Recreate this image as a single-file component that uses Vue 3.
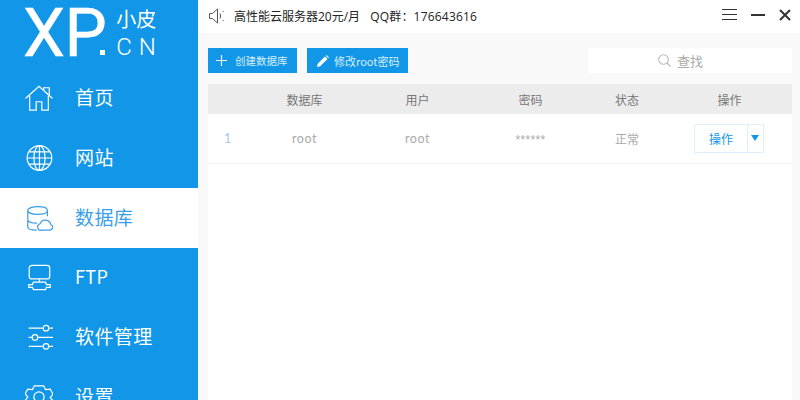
<script setup>
const nav = [
  { key: 'home', label: '首页' },
  { key: 'web', label: '网站' },
  { key: 'db', label: '数据库', active: true },
  { key: 'ftp', label: 'FTP' },
  { key: 'soft', label: '软件管理' },
  { key: 'set', label: '设置' }
]
</script>

<template>
  <div class="app">
    <aside class="side">
      <div class="logo">
        <span class="xp">XP</span><span class="dot"></span>
        <div class="logo-r"><span class="zh">小皮</span><span class="cn">CN</span></div>
      </div>
      <nav class="nav">
        <div v-for="n in nav" :key="n.key" class="item" :class="{ active: n.active }">
          <svg class="ico" viewBox="0 0 30 30" fill="none" stroke="currentColor" stroke-width="1.300">
            <template v-if="n.key === 'home'">
              <path d="M.5 15.500 15 2.500 29.500 15.500" /><path d="M20 6.500V4h6v8" />
              <path d="M5 12.500V28h7v-9h6v9h7V12.500" />
            </template>
            <template v-else-if="n.key === 'web'">
              <circle cx="15.500" cy="15" r="13.200" /><ellipse cx="15.500" cy="15" rx="6" ry="13.200" />
              <path d="M15.500 1.800v26.400M2.300 15h26.400M4.300 8.500h22.400M4.300 21.500h22.400" />
            </template>
            <template v-else-if="n.key === 'db'">
              <path d="M3 7c0-5.500 21-5.500 21 0s-21 5.500-21 0zM3 7v18c0 2 4 3 9.500 3M3 16.500c0 2.500 4 4 10 4M24 7v6" />
              <path d="M18 28h9a3 3 0 0 0 .7-5.800 6 6 0 0 0-11.500-1A3.500 3.500 0 0 0 18 28z" />
            </template>
            <template v-else-if="n.key === 'ftp'">
              <rect x="4.500" y="1.500" width="22" height="14.500" rx="3" />
              <path d="M15.500 16v3.500" />
              <path d="M9 19.500h13l1 2.500h4v3h-4l-1 2.500H9L8 25H4v-3h4z" />
            </template>
            <template v-else-if="n.key === 'soft'">
              <path d="M4 5.500h15M26 5.500h4M4 15.500h3.500M14 15.500h16M4 25h15M26 25h4" />
              <circle cx="22.500" cy="5.500" r="3" /><circle cx="10.700" cy="15.500" r="3" /><circle cx="22.500" cy="25" r="3" />
            </template>
            <template v-else>
              <path d="M10 3h10l2 4 5-.5 3 5.500-3 3.500 3 3.500-3 5.500-5-.5-2 4H10l-2-4-5 .5-3-5.500L3 15 0 11.500 3 6.500l5 .5z" />
              <circle cx="15" cy="15" r="5.500" />
            </template>
          </svg>
          <span class="lbl">{{ n.label }}</span>
        </div>
      </nav>
    </aside>

    <main class="main">
      <header class="top">
        <svg class="spk" width="18" height="16" viewBox="0 0 18 16" fill="none" stroke="#555" stroke-width="1">
          <path d="M1.500 5.500h3l5-4.500v14l-5-4.500h-3z" /><path d="M12 5.500q1.500 2.500 0 5M15 3v1M15 12v1" />
        </svg>
        <span class="notice">高性能云服务器20元/月</span>
        <span class="qq">QQ群：176643616</span>
        <div class="win">
          <svg width="15" height="12" viewBox="0 0 15 12" stroke="#333" stroke-width="1"><path d="M0 .5h15M0 5.500h15M0 10.500h15" /></svg>
          <svg width="14" height="12" viewBox="0 0 14 12" stroke="#333" stroke-width="2"><path d="M0 6h14" /></svg>
          <svg width="12" height="12" viewBox="0 0 12 12" stroke="#333" stroke-width="2"><path d="M1 1l10 10M11 1 1 11" /></svg>
        </div>
      </header>

      <section class="body">
        <div class="tools">
          <button class="btn b1">
            <svg width="11" height="11" viewBox="0 0 11 11" stroke="#fff" stroke-width="1.200"><path d="M5.500 0v11M0 5.500h11" /></svg>
            <span>创建数据库</span>
          </button>
          <button class="btn b2">
            <svg width="12" height="12" viewBox="0 0 12 12" fill="#fff"><path d="M0 12l.7-3.200L8 1.500l2.500 2.500-7.300 7.300zM8.800.7 9.500 0 12 2.500l-.7.7z" /></svg>
            <span>修改root密码</span>
          </button>
          <div class="search">
            <svg width="13" height="13" viewBox="0 0 13 13" fill="none" stroke="#bbb" stroke-width="1.100"><circle cx="5.500" cy="5.500" r="4.800" /><path d="M9 9l3.500 3.500" /></svg>
            <span>查找</span>
          </div>
        </div>

        <div class="table">
          <div class="row head">
            <span></span><span>数据库</span><span>用户</span><span>密码</span><span>状态</span><span>操作</span>
          </div>
          <div class="row data">
            <span class="num">1</span><span>root</span><span>root</span><span class="stars">******</span><span class="st">正常</span>
            <span class="ops"><span class="op">操作</span><span class="caret"><i></i></span></span>
          </div>
        </div>
      </section>
    </main>
  </div>
</template>

<style>
html, body { margin: 0; overflow: hidden; }
</style>

<style scoped>
.app {
  display: flex;
  width: 800px;
  height: 400px;
  overflow: hidden;
  font-family: "Noto Sans CJK SC", "Noto Sans", sans-serif;
}
.side {
  width: 198px;
  flex: none;
  background: #1296e8;
  color: #fff;
}
.logo {
  height: 68px;
  display: flex;
  align-items: flex-start;
  padding-left: 23px;
  box-sizing: border-box;
}
.xp {
  font: 400 67px/66px Roboto, sans-serif;
  letter-spacing: -.5px;
  -webkit-text-stroke: .5px #fff;
}
.dot {
  width: 5px;
  height: 5px;
  background: #fff;
  margin-left: -6px;
  margin-top: 50px;
}
.logo-r {
  display: flex;
  flex-direction: column;
  margin-left: 11px;
  margin-top: 7px;
}
.zh { font-size: 20px; line-height: 24px; }
.cn { font: 300 24px/26px Roboto, sans-serif; letter-spacing: 7px; margin-top: 3px; }
.item {
  height: 60px;
  display: flex;
  align-items: center;
  padding-left: 25px;
  box-sizing: border-box;
}
.item:nth-child(4) .lbl { font-size: 18px; }
.item:nth-child(5) { margin-top: -1px; }
.item.active { background: #fff; color: #3a9fe8; }
.ico { width: 28px; height: 28px; flex: none; }
.lbl { margin-left: 22px; margin-bottom: 4px; font-size: 19px; letter-spacing: .4px; }

.main { flex: 1; display: flex; flex-direction: column; background: #fff; }
.top {
  height: 33px;
  flex: none;
  box-sizing: border-box;
  display: flex;
  align-items: center;
  padding: 0 0 2px 10px;
  font: 12px "Open Sans", "Noto Sans CJK SC", sans-serif;
  color: #222;
}
.spk { margin-right: 8px; }
.qq { margin-left: 10px; letter-spacing: .2px; }
.win { margin: 0 0 1px auto; display: flex; align-items: center; gap: 14px; padding-right: 9px; }
.body {
  flex: 1;
  background: #f9f9f9;
  padding: 15px 8px 0 10px;
  display: flex;
  flex-direction: column;
}
.tools { display: flex; align-items: flex-start; height: 36px; flex: none; }
.btn {
  height: 25px;
  border: 0;
  padding: 0;
  background: #1296e8;
  color: #d8eefc;
  display: flex;
  align-items: center;
  font: 10.500px "Noto Sans CJK SC", sans-serif;
}
.b1 { width: 89px; padding-left: 8px; gap: 8px; }
.b2 { width: 101px; margin-left: 10px; padding-left: 10px; gap: 5px; font-size: 11px; }
.search {
  margin-left: auto;
  width: 204px;
  height: 25px;
  box-sizing: border-box;
  padding-right: 19px;
  background: #fff;
  display: flex;
  align-items: center;
  justify-content: center;
  gap: 6px;
  color: #aaa;
  font-size: 13px;
}
.table { flex: 1; background: #fff; }
.row {
  display: grid;
  grid-template-columns: 40px 113px 113px 113px 80px 125px;
  align-items: center;
  text-align: center;
}
.head {
  height: 30px;
  background: #ececec;
  color: #777;
  font-size: 12px;
}
.data {
  height: 50px;
  box-sizing: border-box;
  border-bottom: 1px solid #f2f2f2;
  color: #a9a9a9;
  font: 12.500px Lato, "Noto Sans CJK SC", sans-serif;
  letter-spacing: .6px;
}
.num { color: #a8c8e4; }
.stars { padding-top: 2px; font: 12px "Liberation Sans", sans-serif; letter-spacing: .3px; }
.st { font: 12px "Noto Sans CJK SC", sans-serif; letter-spacing: 0; }
.ops {
  display: flex;
  width: 70px;
  height: 29px;
  justify-self: start;
  margin-left: 27px;
  box-sizing: border-box;
  border: 1px solid #def0fc;
  color: #1296e8;
  font: 12px "Noto Sans CJK SC", sans-serif;
  letter-spacing: 0;
}
.op { width: 52px; line-height: 27px; }
.caret { flex: 1; border-left: 1px solid #def0fc; padding: 10px 0 0 3px; }
.caret i {
  display: block;
  width: 0;
  height: 0;
  border: 4.500px solid transparent;
  border-top: 6px solid #1296e8;
  border-bottom: 0;
}
</style>
